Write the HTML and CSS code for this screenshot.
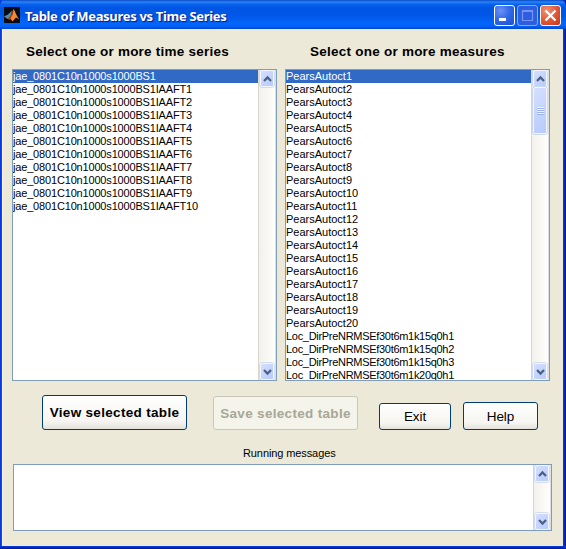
FILE: index.html
```html
<!DOCTYPE html>
<html lang="en">
<head>
<meta charset="utf-8">
<title>Table of Measures vs Time Series</title>
<link rel="stylesheet" href="styles.css">
</head>
<body>
<div class="window">
  <header class="titlebar">
    <svg class="logo" viewBox="0 0 16 16"><rect width="16" height="16" fill="#080c12"/><path d="M0 9.5 4 7.5 8 3.5 6.5 11 3.5 12Z" fill="#4d8fa8"/><path d="M3.5 12 6.5 8.5 9.5 2 11 4.5 8 10.5 6 13Z" fill="#a63c16"/><path d="M9.5 2C11 4 12.500 9 15.500 12.500L12 10.500 8.500 14.500 6.500 11.500 9 7Z" fill="#f28a35"/></svg>
    <h1 class="title">Table of Measures vs Time Series</h1>
    <div class="controls">
      <span class="control"><svg viewBox="0 0 21 21"><path d="M5 13h7v3H5z" fill="#fff"/></svg></span>
      <span class="control dimmed"><svg viewBox="0 0 21 21"><path d="M5.500 5.500h10v10h-10zM5 6.500h11" fill="none" stroke="#7795ee" stroke-width="1.200"/></svg></span>
      <span class="control close"><svg viewBox="0 0 21 21"><path d="M5.500 5.500l10 10m0-10l-10 10" stroke="#fff" stroke-width="2.200"/></svg></span>
    </div>
  </header>
  <main class="content">
    <div class="lists">
      <section>
        <h2 class="heading heading-series">Select one or more time series</h2>
        <div class="listbox">
          <ul class="items series">
            <li class="selected">jae_0801C10n1000s1000BS1</li>
            <li>jae_0801C10n1000s1000BS1IAAFT1</li>
            <li>jae_0801C10n1000s1000BS1IAAFT2</li>
            <li>jae_0801C10n1000s1000BS1IAAFT3</li>
            <li>jae_0801C10n1000s1000BS1IAAFT4</li>
            <li>jae_0801C10n1000s1000BS1IAAFT5</li>
            <li>jae_0801C10n1000s1000BS1IAAFT6</li>
            <li>jae_0801C10n1000s1000BS1IAAFT7</li>
            <li>jae_0801C10n1000s1000BS1IAAFT8</li>
            <li>jae_0801C10n1000s1000BS1IAAFT9</li>
            <li>jae_0801C10n1000s1000BS1IAAFT10</li>
          </ul>
          <div class="scrollbar">
            <span class="arrow"><svg viewBox="0 0 15 16"><path d="M4 10l3.500-3.500L11 10"/></svg></span>
            <span class="arrow down"><svg viewBox="0 0 15 16"><path d="M4 6l3.500 3.500L11 6"/></svg></span>
          </div>
        </div>
      </section>
      <section>
        <h2 class="heading heading-measures">Select one or more measures</h2>
        <div class="listbox">
          <ul class="items measures">
            <li class="selected">PearsAutoct1</li>
            <li>PearsAutoct2</li>
            <li>PearsAutoct3</li>
            <li>PearsAutoct4</li>
            <li>PearsAutoct5</li>
            <li>PearsAutoct6</li>
            <li>PearsAutoct7</li>
            <li>PearsAutoct8</li>
            <li>PearsAutoct9</li>
            <li>PearsAutoct10</li>
            <li>PearsAutoct11</li>
            <li>PearsAutoct12</li>
            <li>PearsAutoct13</li>
            <li>PearsAutoct14</li>
            <li>PearsAutoct15</li>
            <li>PearsAutoct16</li>
            <li>PearsAutoct17</li>
            <li>PearsAutoct18</li>
            <li>PearsAutoct19</li>
            <li>PearsAutoct20</li>
            <li class="loc">Loc_DirPreNRMSEf30t6m1k15q0h1</li>
            <li class="loc">Loc_DirPreNRMSEf30t6m1k15q0h2</li>
            <li class="loc">Loc_DirPreNRMSEf30t6m1k15q0h3</li>
            <li class="loc">Loc_DirPreNRMSEf30t6m1k20q0h1</li>
          </ul>
          <div class="scrollbar">
            <span class="arrow"><svg viewBox="0 0 15 16"><path d="M4 10l3.500-3.500L11 10"/></svg></span>
            <span class="thumb"><i></i></span>
            <span class="arrow down"><svg viewBox="0 0 15 16"><path d="M4 6l3.500 3.500L11 6"/></svg></span>
          </div>
        </div>
      </section>
    </div>
    <div class="actions">
      <button class="button view">View selected table</button>
      <button class="button save" disabled>Save selected table</button>
      <button class="button exit">Exit</button>
      <button class="button help">Help</button>
    </div>
    <p class="caption">Running messages</p>
    <div class="listbox messages">
      <div class="items"></div>
      <div class="scrollbar">
        <span class="arrow"><svg viewBox="0 0 15 16"><path d="M4 10l3.500-3.500L11 10"/></svg></span>
        <span class="arrow down"><svg viewBox="0 0 15 16"><path d="M4 6l3.500 3.500L11 6"/></svg></span>
      </div>
    </div>
  </main>
</div>
</body>
</html>
```
FILE: styles.css
```css
* { box-sizing: border-box; }
body { margin: 0; background: #0831d9; font-family: "Liberation Sans", Arial, sans-serif; color: #000; }
h1, h2, p, ul { margin: 0; padding: 0; }
svg { display: block; }

.window {
  width: 566px;
  height: 549px;
  display: flex;
  flex-direction: column;
  overflow: hidden;
  background:
    linear-gradient(#0841dc, #001590) 0 100% / 100% 3px no-repeat,
    linear-gradient(90deg, #0831d9, #0855ee 2px, #0841dc 563px, #001590);
}
.titlebar {
  height: 29px;
  flex: none;
  display: flex;
  align-items: flex-start;
  padding: 5px 5px 0 4px;
  border-radius: 6px 6px 0 0;
  background: linear-gradient(#0a48c4 0, #2a85f6 2px, #0a63ee 4px, #0055e3 8px, #0058e8 16px, #0365fb 23px, #0263fa 26px, #0046cb 29px);
}
.logo { width: 16px; height: 16px; margin-top: 2px; }
.title {
  margin-left: 5px;
  font: bold 13px/22px "Noto Sans", sans-serif;
  letter-spacing: -0.31px;
  color: #fff;
  text-shadow: 1px 1px 1px #0a1883;
  white-space: nowrap;
}
.controls { display: flex; gap: 2px; margin-left: auto; }
.control {
  width: 21px;
  height: 21px;
  border: 1px solid #fff;
  border-radius: 3px;
  background: radial-gradient(circle at 30% 25%, #6c92f5, #3369e7 45%, #1b4fd3);
}
.control svg { width: 21px; height: 21px; margin: -1px; }
.control.dimmed { border-color: #8da9f3; background: #2c5ee3; }
.control.close { background: radial-gradient(circle at 30% 25%, #ee9477, #e2593a 50%, #c93413); }

.content {
  flex: none;
  width: 561px;
  height: 517px;
  margin-left: 2px;
  background: #ece9d8;
  border-left: 1px solid #f7f5ee;
}
.lists { display: flex; gap: 8px; padding-left: 9px; }
.heading { height: 40px; font-size: 13.5px; line-height: 46px; font-weight: bold; letter-spacing: 0.24px; white-space: nowrap; }
.heading-series { padding-left: 14px; }
.heading-measures { padding-left: 25px; }
.listbox {
  width: 265px;
  height: 312px;
  display: flex;
  border: 1px solid #7f9db9;
  background: #fff;
  overflow: hidden;
}
.items { flex: 1; min-width: 0; list-style: none; font-size: 11px; line-height: 13px; white-space: nowrap; overflow: hidden; }
.items li { height: 13px; }
.series { letter-spacing: -0.17px; }
.items .loc { letter-spacing: -0.3px; }
.items .selected { background: #316ac5; color: #fff; }
.scrollbar {
  width: 18px;
  flex: none;
  display: flex;
  flex-direction: column;
  padding: 0 1px;
  border-left: 1px solid #d8d6cd;
  border-right: 1px solid #dcdfe5;
  background: linear-gradient(90deg, #f3f1ec, #fefefb);
}
.arrow, .thumb { border: 1px solid #f3f6ff; border-radius: 2px; background: linear-gradient(135deg, #d5e0fe, #b7cafb); }
.arrow { height: 17px; flex: none; box-shadow: 0 0 0 0.5px #b0c3ed; }
.arrow svg { width: 15px; height: 16px; margin-left: -1px; fill: none; stroke: #4d6185; stroke-width: 2.3; }
.arrow.down { margin-top: auto; }
.thumb { height: 47px; display: flex; align-items: center; justify-content: center; box-shadow: 0 0 0 0.5px #a3b9e8; }
.thumb i { width: 7px; height: 8px; background: repeating-linear-gradient(#eef4fe 0 1px, #9cb3ed 1px 2px); }

.actions { display: flex; align-items: flex-end; height: 49px; padding-left: 39px; }
.button {
  padding: 0;
  border: 1px solid #003c74;
  border-radius: 3px;
  background: linear-gradient(#fff, #f6f5f1 75%, #e4e2da);
  font: 13.5px "Liberation Sans", Arial, sans-serif;
  letter-spacing: -0.1px;
  color: #000;
  white-space: nowrap;
}
.view, .save { width: 145px; font-weight: bold; letter-spacing: 0.32px; }
.view { height: 35px; }
.save { height: 34px; margin-left: 26px; color: #a8a797; border-color: #c9c7ba; background: #f5f4ea; }
.exit { width: 72px; height: 27px; margin-left: 21px; }
.help { width: 75px; height: 28px; margin-left: 12px; }
.caption { height: 34px; padding-left: 240px; font-size: 11px; line-height: 47px; letter-spacing: -0.1px; white-space: nowrap; }
.messages { width: 539px; height: 67px; margin-left: 10px; }
```
